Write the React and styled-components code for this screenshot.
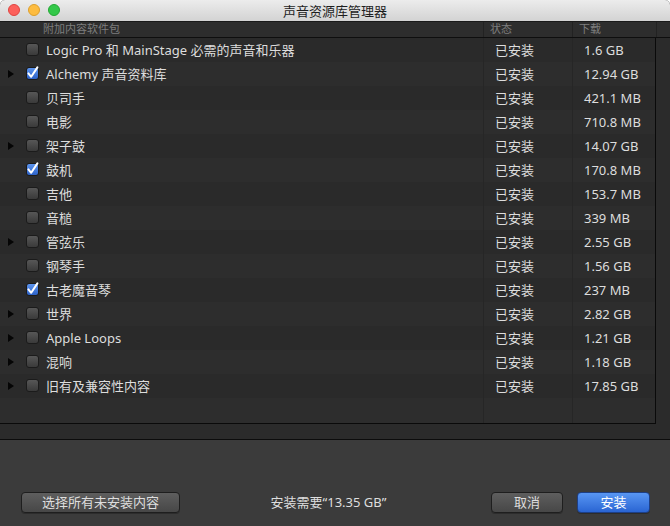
import styled, { createGlobalStyle } from "styled-components";

const Global = createGlobalStyle`
    html, body {
        margin: 0;
        padding: 0;
        background: #ffffff;
    }
    * {
        box-sizing: border-box;
    }
`;

const font = `"Noto Sans", "Noto Sans CJK SC", sans-serif`;

const Window = styled.div`
    width: 670px;
    height: 526px;
    display: flex;
    flex-direction: column;
    background: #2b2b2b;
    font-family: ${font};
    border-radius: 5px 5px 0 0;
    overflow: hidden;
`;

const TitleBar = styled.div`
    height: 22px;
    flex-shrink: 0;
    display: flex;
    align-items: center;
    position: relative;
    background: linear-gradient(#ececec, #d3d3d3);
    border-bottom: 1px solid #1a1a1a;
    justify-content: center;
    font-size: 13px;
    color: #1e1e1e;
`;

const Lights = styled.div`
    position: absolute;
    left: 8px;
    top: 4px;
    display: flex;
    gap: 8px;
`;

const Light = styled.span`
    width: 12px;
    height: 12px;
    border-radius: 50%;
    background: ${(p) => p.$c};
    border: 0.5px solid ${(p) => p.$b};
`;

const Header = styled.div`
    height: 16px;
    flex-shrink: 0;
    display: grid;
    grid-template-columns: 483px 89px 84px 14px;
    background: #2d2d2d;
    border-bottom: 1px solid #0e0e0e;
    font-size: 11px;
    color: #7d7d7d;
    line-height: 14px;
`;

const HeadCell = styled.div`
    padding-left: ${(p) => p.$pad || 6}px;
    border-left: ${(p) => (p.$first ? "none" : "1px solid #222")};
    white-space: nowrap;
`;

const Body = styled.div`
    display: flex;
    flex-shrink: 0;
`;

const Table = styled.div`
    width: 656px;
    border-right: 1px solid #0a0a0a;
    border-bottom: 1px solid #0a0a0a;
    display: flex;
    flex-direction: column;
`;

const Gutter = styled.div`
    flex: 1;
    background: #2b2b2b;
`;

const Row = styled.div`
    height: ${(p) => p.$h || 24}px;
    display: grid;
    grid-template-columns: 483px 89px 83px;
    background: ${(p) => (p.$alt ? "#2d2d2d" : "#2a2a2a")};
    font-size: 13px;
    color: #dddddd;
`;

const NameCell = styled.div`
    display: flex;
    align-items: center;
    white-space: nowrap;
    padding-bottom: 1px;
`;

const Cell = styled.div`
    display: flex;
    align-items: center;
    padding-left: ${(p) => p.$pad}px;
    padding-bottom: 1px;
    border-left: 1px solid #262626;
    white-space: nowrap;
`;

const Arrow = styled.span`
    width: 0;
    height: 0;
    margin-left: 8px;
    border-top: 4px solid transparent;
    border-bottom: 4px solid transparent;
    border-left: 6px solid ${(p) => (p.$show ? "#050505" : "transparent")};
`;

const Box = styled.span`
    width: 13px;
    height: 13px;
    margin-left: 12px;
    margin-right: 7px;
    border-radius: 3px;
    display: flex;
    align-items: center;
    justify-content: center;
    border: 1px solid #1b1b1b;
    background: ${(p) =>
        p.$on
            ? "linear-gradient(#5d95ee, #2d62c8)"
            : "linear-gradient(#575757, #3a3a3a)"};
`;

const Strip = styled.div`
    height: 16px;
    flex-shrink: 0;
    background: #2b2b2b;
    border-bottom: 1px solid #0c0c0c;
`;

const Footer = styled.div`
    flex: 1;
    background: #3b3b3b;
    display: flex;
    align-items: flex-end;
    padding: 0 20px 13px 21px;
`;

const Button = styled.button`
    height: 21px;
    width: ${(p) => p.$w}px;
    border-radius: 4px;
    border: 1px solid ${(p) => (p.$primary ? "#1d3f86" : "#1e1e1e")};
    background: ${(p) =>
        p.$primary
            ? "linear-gradient(#5896f3, #2a65d3)"
            : "linear-gradient(#5e5e5e, #474747)"};
    color: ${(p) => (p.$primary ? "#ffffff" : "#dedede")};
    font-family: ${font};
    font-size: 13px;
    padding: 0;
    line-height: 19px;
    box-shadow: 0 1px 0 rgba(0, 0, 0, 0.25);
`;

const Need = styled.div`
    flex: 1;
    text-align: center;
    font-size: 13px;
    color: #dedede;
    line-height: 21px;
    padding-right: 14px;
`;

const Buttons = styled.div`
    display: flex;
    gap: 14px;
`;

const Check = () => (
    <svg width="13" height="13" viewBox="0 0 13 13" style={{ overflow: "visible" }}>
        <path d="M2.4 6.4 L5.2 9.8 L11.4 0.4" fill="none" stroke="#fff" strokeWidth="2" strokeLinecap="round" strokeLinejoin="round" />
    </svg>
);

const items = [
    ["Logic Pro 和 MainStage 必需的声音和乐器", false, false, "1.6 GB"],
    ["Alchemy 声音资料库", true, true, "12.94 GB"],
    ["贝司手", false, false, "421.1 MB"],
    ["电影", false, false, "710.8 MB"],
    ["架子鼓", true, false, "14.07 GB"],
    ["鼓机", false, true, "170.8 MB"],
    ["吉他", false, false, "153.7 MB"],
    ["音槌", false, false, "339 MB"],
    ["管弦乐", true, false, "2.55 GB"],
    ["钢琴手", false, false, "1.56 GB"],
    ["古老魔音琴", false, true, "237 MB"],
    ["世界", true, false, "2.82 GB"],
    ["Apple Loops", true, false, "1.21 GB"],
    ["混响", true, false, "1.18 GB"],
    ["旧有及兼容性内容", true, false, "17.85 GB"],
];

export default function App() {
    return (
        <>
            <Global />
            <Window>
                <TitleBar>
                    <Lights>
                        <Light $c="#fc605b" $b="#de4440" />
                        <Light $c="#fdbc40" $b="#dc9f2c" />
                        <Light $c="#34c84a" $b="#23a834" />
                    </Lights>
                    声音资源库管理器
                </TitleBar>

                <Header>
                    <HeadCell $first $pad={43}>附加内容软件包</HeadCell>
                    <HeadCell>状态</HeadCell>
                    <HeadCell>下载</HeadCell>
                    <HeadCell />
                </Header>

                <Body>
                    <Table>
                        {items.map(([name, arrow, on, size], i) => (
                            <Row key={name} $alt={i % 2 === 1}>
                                <NameCell>
                                    <Arrow $show={arrow} />
                                    <Box $on={on}>{on && <Check />}</Box>
                                    {name}
                                </NameCell>
                                <Cell $pad={11}>已安装</Cell>
                                <Cell $pad={11}>{size}</Cell>
                            </Row>
                        ))}
                        <Row $h={25} $alt={items.length % 2 === 1}>
                            <NameCell />
                            <Cell $pad={11} />
                            <Cell $pad={11} />
                        </Row>
                    </Table>
                    <Gutter />
                </Body>

                <Strip />

                <Footer>
                    <Button $w={159}>选择所有未安装内容</Button>
                    <Need>安装需要“13.35 GB”</Need>
                    <Buttons>
                        <Button $w={72}>取消</Button>
                        <Button $w={73} $primary>安装</Button>
                    </Buttons>
                </Footer>
            </Window>
        </>
    );
}
